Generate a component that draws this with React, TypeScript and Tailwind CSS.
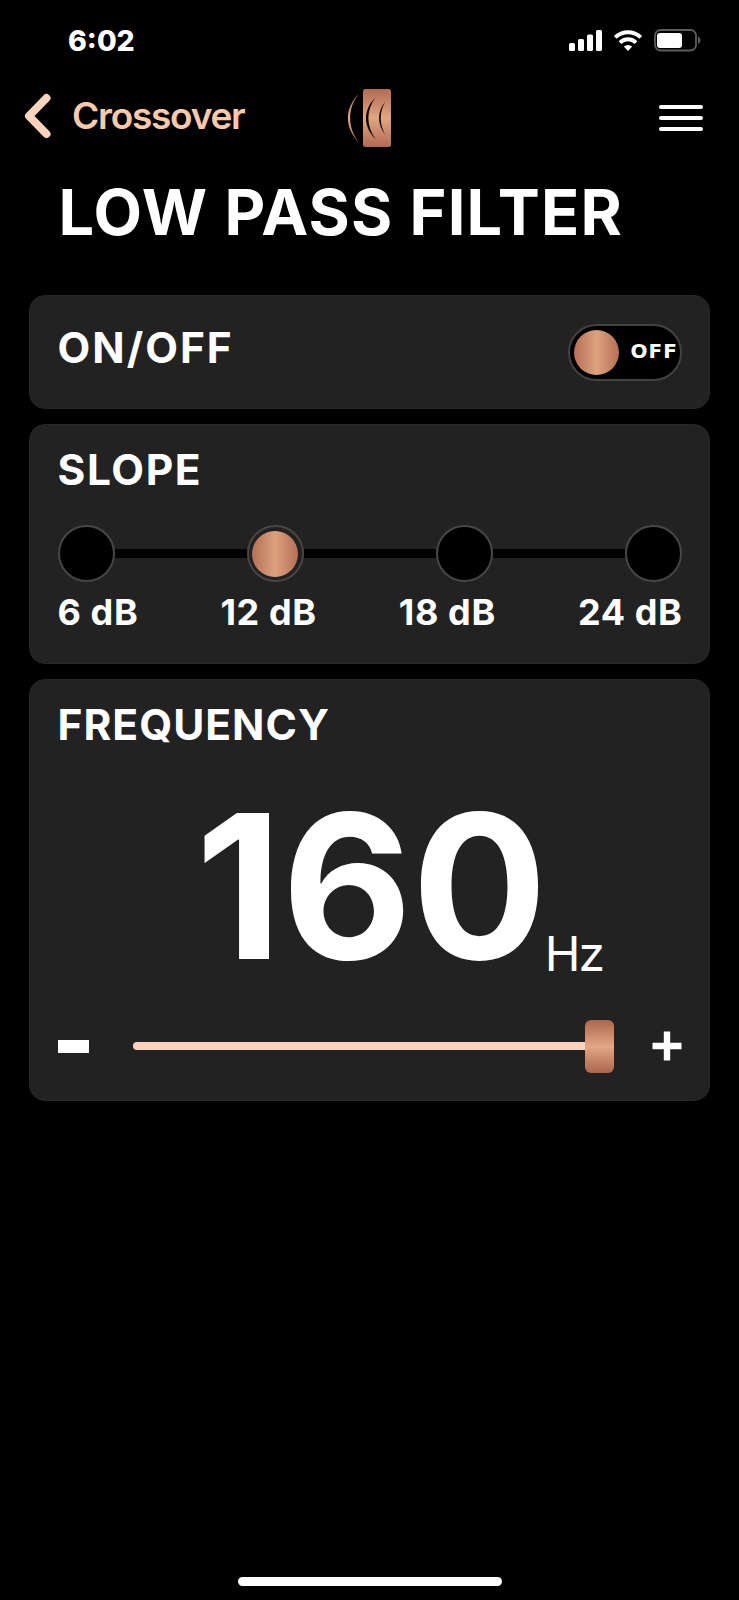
import { useState } from "react";

interface CardProps {
  className?: string;
  children: React.ReactNode;
}

const slopes = ["6 dB", "12 dB", "18 dB", "24 dB"];

const Card: React.FC<CardProps> = ({ className = "", children }) => (
  <section
    className={`rounded-2xl border border-[#272727] bg-[#222222] px-[27.5px] ${className}`}
  >
    {children}
  </section>
);

const StatusBar = () => (
  <div className="flex h-20 items-center justify-between pr-[38px] pl-[68px]">
    <span className="pt-px text-[28.5px] leading-[42px] font-extrabold">
      6:02
    </span>
    <svg width="133" height="24" viewBox="0 0 133 24" fill="none">
      <g fill="#fff">
        <rect x="1" y="15" width="6" height="8" rx="1.6" />
        <rect x="10" y="11" width="6" height="12" rx="1.6" />
        <rect x="19" y="6.5" width="6" height="16.5" rx="1.6" />
        <rect x="28" y="2" width="6" height="21" rx="1.6" />
      </g>
      <g stroke="#fff" strokeWidth="4">
        <path d="M47.2 9.4a18.4 18.4 0 0 1 25.6 0" />
        <path d="M52 14.6a11.4 11.4 0 0 1 16 0" />
      </g>
      <path d="M60 23l-4.2-4.4a6.2 6.2 0 0 1 8.4 0z" fill="#fff" />
      <rect
        x="87"
        y="2"
        width="41"
        height="20.5"
        rx="5.5"
        stroke="#5c5c5c"
        strokeWidth="1.8"
      />
      <rect x="89" y="5" width="25" height="15" rx="3" fill="#fff" />
      <path d="M130 8.5c3.2 1.2 3.2 6.3 0 7.5z" fill="#5c5c5c" />
    </svg>
  </div>
);

const Logo = () => (
  <svg width="44" height="60" viewBox="0 0 44 60">
    <defs>
      <linearGradient id="copper" x1="0" y1="0" x2="0" y2="1">
        <stop offset="0" stopColor="#b16b53" />
        <stop offset="0.5" stopColor="#e2a581" />
        <stop offset="1" stopColor="#b16b53" />
      </linearGradient>
    </defs>
    <path d="M12.5 5C-3 20-3 40 12.5 55C0 40 0 20 12.5 5z" fill="url(#copper)" />
    <rect x="16" y="1" width="28" height="58" rx="2.5" fill="url(#copper)" />
    <path d="M28.5 9.5C15.8 22 15.8 38 28.5 51C19 38 19 22 28.5 9.5z" />
    <path d="M38.3 13.5C30 24 30 36 38.3 47C32.2 36 32.2 24 38.3 13.5z" />
  </svg>
);

const Header = () => (
  <header className="grid h-[72px] grid-cols-3 items-center px-6">
    <button className="flex items-center gap-5 justify-self-start text-[#f8caa9]">
      <svg width="28" height="46" viewBox="0 0 28 46" fill="none">
        <path
          d="M22.5 5L5 23L22.5 41"
          stroke="#fdd3bb"
          strokeWidth="8"
          strokeLinecap="round"
          strokeLinejoin="round"
        />
      </svg>
      <span className="text-[37px] leading-[44px] font-semibold tracking-[-1.25px]">
        Crossover
      </span>
    </button>
    <div className="justify-self-center pt-1">
      <Logo />
    </div>
    <button className="mt-1 mr-3 flex flex-col gap-[7px] justify-self-end">
      <span className="h-1 w-11 rounded-full bg-white" />
      <span className="h-1 w-11 rounded-full bg-white" />
      <span className="h-1 w-11 rounded-full bg-white" />
    </button>
  </header>
);

const Toggle = () => (
  <button className="flex h-[57px] w-[114px] items-center rounded-full border-2 border-[#404243] bg-black pl-1">
    <span className="size-[45px] shrink-0 rounded-full bg-linear-to-r from-[#b66f56] via-[#dca27e] to-[#b66f56]" />
    <span className="mb-[3px] ml-3 font-['DejaVu_Sans'] text-[20px] leading-6 font-bold tracking-[1px]">
      OFF
    </span>
  </button>
);

const SlopePicker = () => {
  const [selected, setSelected] = useState("12 dB");

  return (
    <>
      <div className="mt-[30.5px] flex items-center">
        {slopes.map((slope, i) => (
          <div key={slope} className={`flex items-center ${i > 0 ? "flex-1" : ""}`}>
            {i > 0 && <div className="h-[9px] flex-1 bg-black" />}
            <button
              onClick={() => setSelected(slope)}
              className={`flex size-[57px] items-center justify-center rounded-full border-2 border-[#464646] ${
                selected === slope ? "bg-[#222222]" : "bg-black"
              }`}
            >
              {selected === slope && (
                <span className="size-[46px] rounded-full bg-linear-to-r from-[#b66f56] via-[#dca27e] to-[#b66f56]" />
              )}
            </button>
          </div>
        ))}
      </div>
      <div className="mt-2 -mr-px flex justify-between text-[36px] leading-[44px] font-bold tracking-[0.6px]">
        {slopes.map((slope) => (
          <span key={slope}>{slope}</span>
        ))}
      </div>
    </>
  );
};

const FrequencySlider = () => (
  <div className="mt-[34px] flex items-center">
    <button className="h-[13px] w-[31px] bg-white" />
    <div className="ml-11 flex h-[53px] flex-1 items-center">
      <div className="h-[7.5px] flex-1 rounded-l-full bg-[#fdd3bf]" />
      <div className="h-[53px] w-[29px] rounded-md bg-linear-to-b from-[#ac664d] via-[#e2a785] to-[#ac664d]" />
    </div>
    <button className="ml-[38px]">
      <svg width="30" height="30" viewBox="0 0 30 30">
        <path d="M15 0.5v29M0.5 15h29" stroke="#fff" strokeWidth="6.4" />
      </svg>
    </button>
  </div>
);

const App = () => {
  return (
    <div className="flex h-[1600px] w-[739px] flex-col bg-black font-[Inter,'Liberation_Sans',sans-serif] text-white">
      <StatusBar />
      <Header />
      <h1 className="mt-7 pl-[58.5px] text-[63px] leading-[64px] font-bold tracking-[1.2px] whitespace-nowrap">
        LOW PASS FILTER
      </h1>
      <main className="mt-[51px] flex flex-col gap-[14.5px] px-[29px]">
        <Card className="flex h-[114px] items-center justify-between">
          <h2 className="pb-2 text-[42.5px] leading-[50px] font-bold tracking-[2px]">
            ON/OFF
          </h2>
          <Toggle />
        </Card>
        <Card className="h-[240.5px]">
          <h2 className="mt-5 text-[42.5px] leading-[50px] font-bold tracking-[1.6px]">
            SLOPE
          </h2>
          <SlopePicker />
        </Card>
        <Card className="h-[422.5px]">
          <h2 className="mt-5 text-[42.5px] leading-[50px] font-bold tracking-[1px]">
            FREQUENCY
          </h2>
          <div className="mt-9 flex items-end pl-[138px]">
            <span className="text-[201px] leading-[200px] font-bold tracking-[-0.5px]">
              160
            </span>
            <span className="mb-[3px] -ml-0.5 text-[48px] leading-[58px] font-normal tracking-[-2px]">
              Hz
            </span>
          </div>
          <FrequencySlider />
        </Card>
      </main>
      <div className="mt-auto mb-3.5 h-[9.5px] w-[264px] self-center rounded-full bg-white" />
    </div>
  );
};

export default App;
